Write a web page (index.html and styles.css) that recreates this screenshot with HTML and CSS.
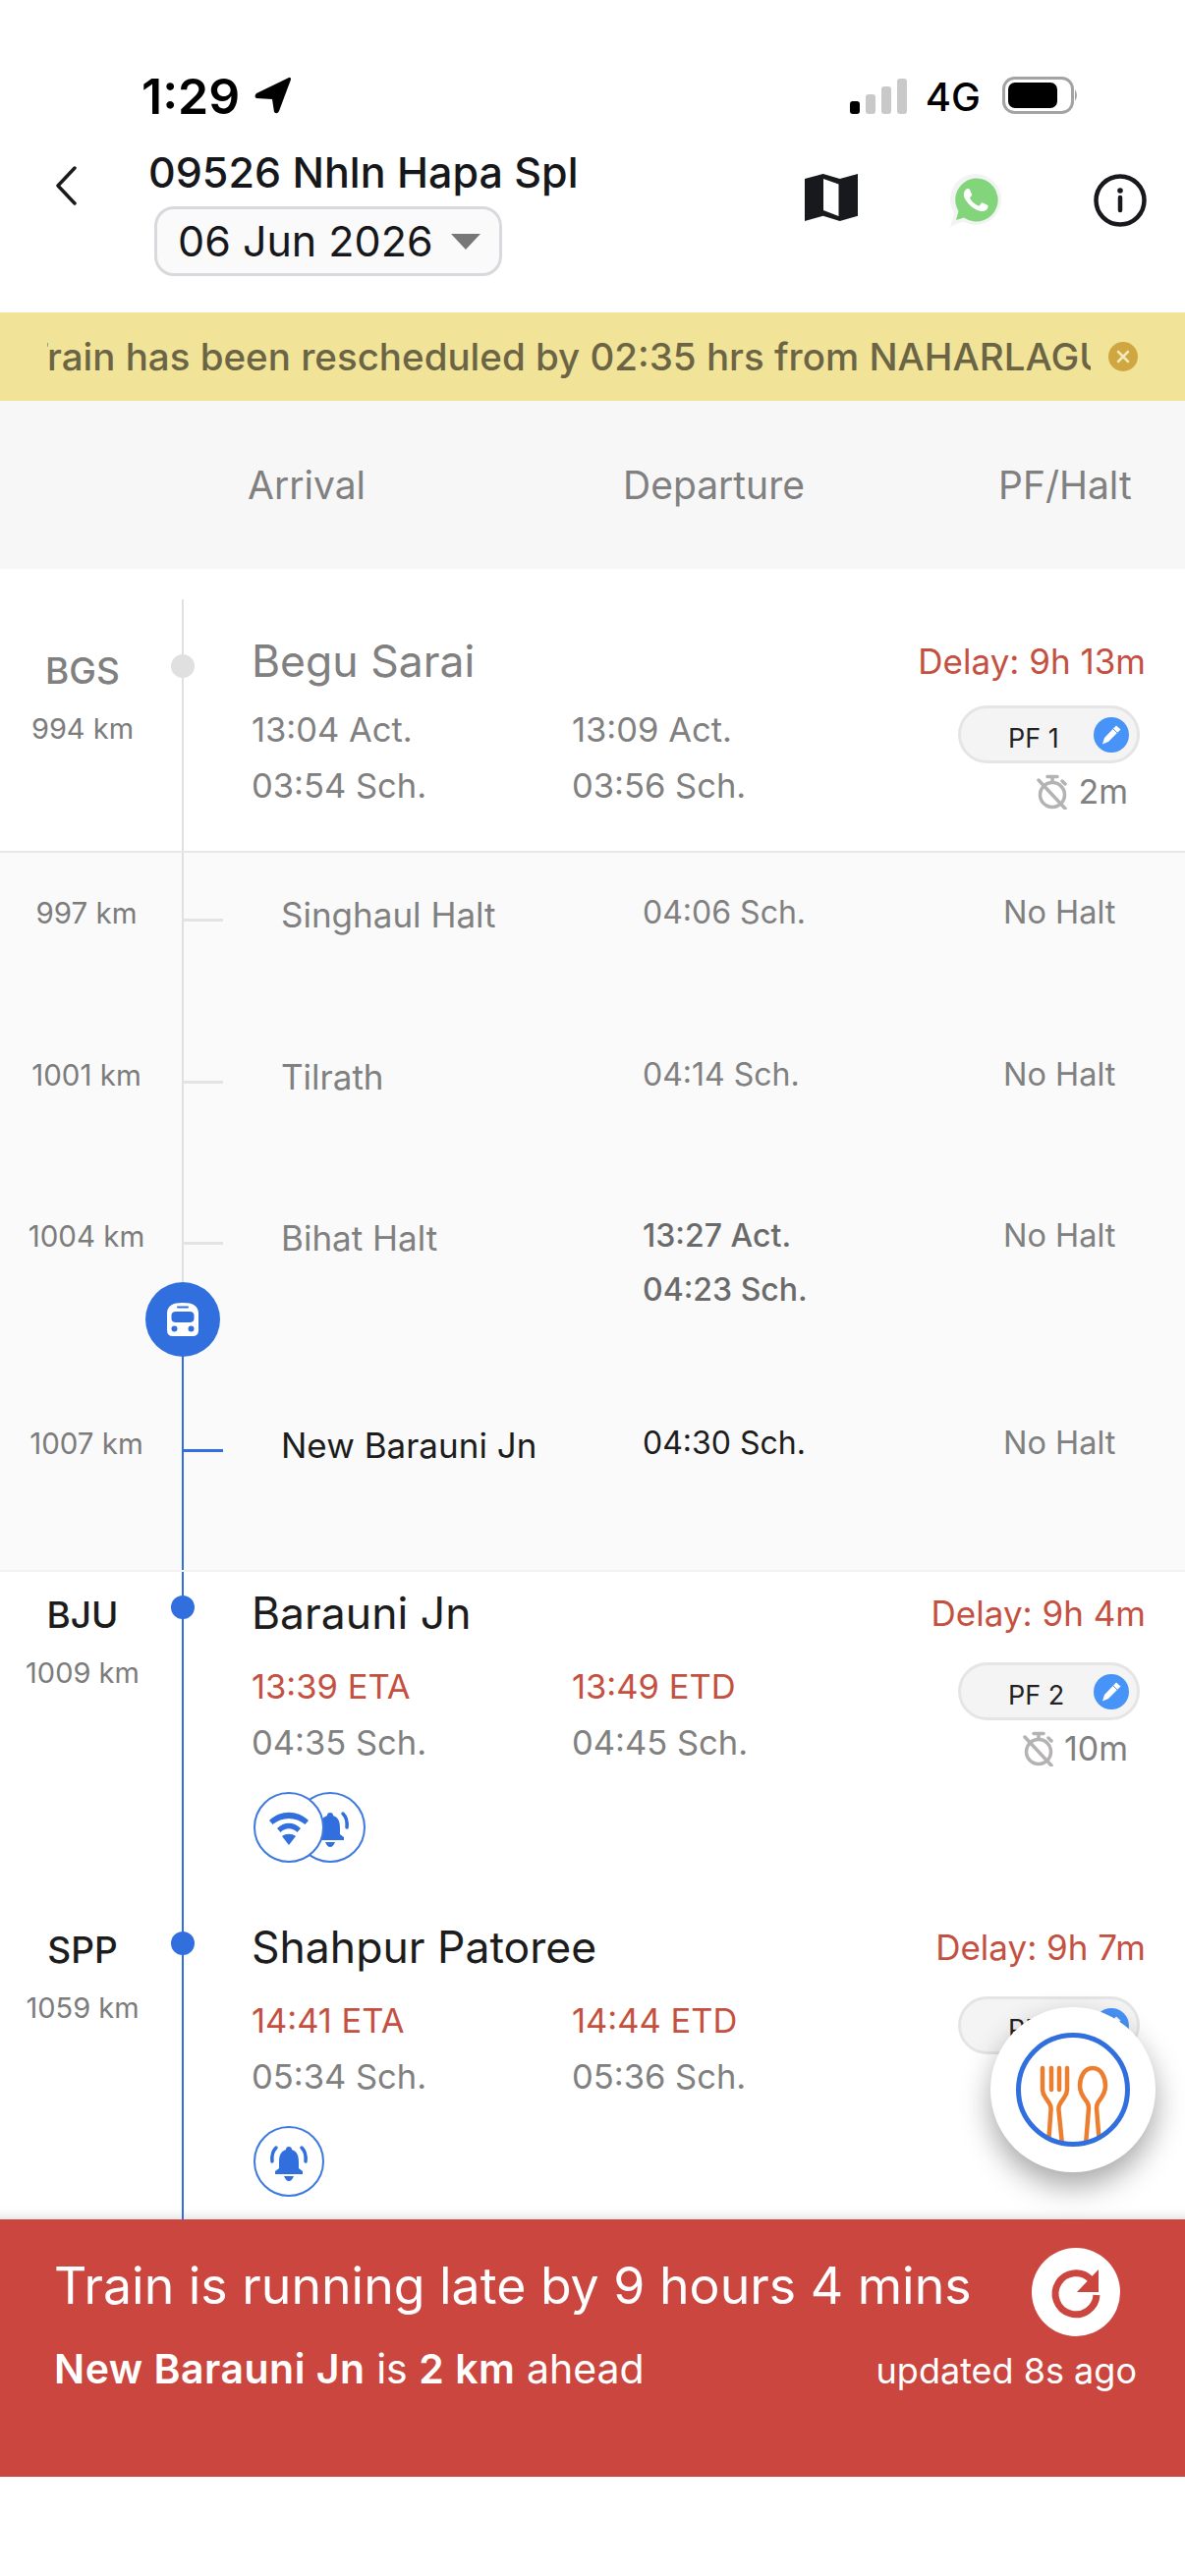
FILE: index.html
```html
<!DOCTYPE html>
<html lang="en">
<head>
  <meta charset="UTF-8" />
  <meta name="viewport" content="width=device-width, initial-scale=1.0"/>
  <title>09526 Nhln Hapa Spl</title>
  <link rel="stylesheet" href="styles.css">
</head>
<body>
  <div class="screen">
    <div class="status">
      <span class="clock">1:29</span>
      <svg class="loc" width="40" height="40" viewBox="0 0 40 40"><path d="M36 2 L3 18 Q0 21 3 23 L19 24 L21 37 Q24 40 26 36 L38 4 Q38 1 36 2 Z" fill="#000"/></svg>
      <svg class="signal" width="58" height="38" viewBox="0 0 58 38"><rect x="0" y="24" width="10" height="13" rx="3" fill="#000"/><rect x="16" y="17" width="10" height="20" rx="3" fill="#c9c9c9"/><rect x="32" y="9" width="10" height="28" rx="3" fill="#c9c9c9"/><rect x="48" y="1" width="10" height="36" rx="3" fill="#c9c9c9"/></svg>
      <span class="net">4G</span>
      <svg class="batt" width="78" height="38" viewBox="0 0 78 38"><rect x="1.500" y="1.500" width="70" height="35" rx="11" fill="none" stroke="#a3a3a3" stroke-width="3"/><rect x="6" y="6" width="50" height="26" rx="7" fill="#000"/><path d="M74 13 Q78 19 74 25 Z" fill="#a3a3a3"/></svg>
    </div>

    <div class="topbar">
      <svg class="back" width="24" height="40" viewBox="0 0 24 40"><path d="M21 2 L4 20 L21 38" fill="none" stroke="#1a1a1a" stroke-width="3.500" stroke-linecap="round" stroke-linejoin="round"/></svg>
      <div class="train">
        <div class="train-name">09526 Nhln Hapa Spl</div>
        <div class="date-pill">06 Jun 2026<span class="caret"></span></div>
      </div>
      <div class="top-icons">
        <svg width="54" height="48" viewBox="0 0 54 48"><path fill-rule="evenodd" d="M0 5 L18.700 0 L35.700 5 L54 0 V42.700 L35.700 48 L18.700 42.700 L0 48 Z M19 5 V37 L34.500 43 V10.500 Z" fill="#18191d"/></svg>
        <svg width="52" height="54" viewBox="0 0 52 54"><path d="M26 0 A26 26 0 1 1 13 48.500 L0 54 L4 40 A26 26 0 0 1 26 0 Z" fill="#f2f4f3"/><path d="M26 4.500 A22 22 0 1 1 14 44.500 L6 47 L8.500 38 A22 22 0 0 1 26 4.500 Z" fill="#82d57a"/><path transform="translate(1.500,2) scale(2.050)" fill="#fff" d="M17.472 14.382c-.297-.149-1.758-.867-2.03-.967-.273-.099-.471-.148-.67.15-.197.297-.767.966-.94 1.164-.173.199-.347.223-.644.075-.297-.15-1.255-.463-2.39-1.475-.883-.788-1.48-1.761-1.653-2.059-.173-.297-.018-.458.13-.606.134-.133.298-.347.446-.52.149-.174.198-.298.298-.497.099-.198.05-.371-.025-.52-.075-.149-.669-1.612-.916-2.207-.242-.579-.487-.5-.669-.51-.173-.008-.371-.01-.57-.01-.198 0-.52.074-.792.372-.272.297-1.04 1.016-1.04 2.479 0 1.462 1.065 2.875 1.213 3.074.149.198 2.096 3.2 5.077 4.487.709.306 1.262.489 1.694.625.712.227 1.36.195 1.871.118.571-.085 1.758-.719 2.006-1.413.248-.694.248-1.289.173-1.413-.074-.124-.272-.198-.57-.347z"/></svg>
        <svg width="54" height="54" viewBox="0 0 54 54"><circle cx="27" cy="27" r="24.500" fill="none" stroke="#18191d" stroke-width="4.500"/><circle cx="27" cy="17" r="2.800" fill="#18191d"/><path d="M27 24 V37" stroke="#18191d" stroke-width="4.500" stroke-linecap="round"/></svg>
      </div>
    </div>

    <div class="notice">
      <div class="notice-clip"><span class="notice-text">Train has been rescheduled by 02:35 hrs from NAHARLAGUN</span></div>
      <svg width="30" height="30" viewBox="0 0 30 30"><circle cx="15" cy="15" r="15" fill="#cfa640"/><path d="M10 10 L20 20 M20 10 L10 20" stroke="#f3e9b8" stroke-width="2.500" stroke-linecap="round"/></svg>
    </div>

    <div class="table-head">
      <span class="th-arr">Arrival</span>
      <span class="th-dep">Departure</span>
      <span class="th-pf">PF/Halt</span>
    </div>

    <div class="list">
      <div class="stop stop-past">
        <div class="side">
          <div class="code">BGS</div>
          <div class="km">994 km</div>
        </div>
        <div class="rail rail-first"><i class="dot"></i></div>
        <div class="body">
          <div class="head">
            <span class="name">Begu Sarai</span>
            <span class="delay">Delay: 9h 13m</span>
          </div>
          <div class="main">
            <div class="times">
              <div><div>13:04 Act.</div><div>03:54 Sch.</div></div>
              <div><div>13:09 Act.</div><div>03:56 Sch.</div></div>
            </div>
            <div class="pf">
              <div class="pf-pill"><span>PF 1</span><svg width="36" height="36" viewBox="0 0 36 36"><use href="#pen"/></svg></div>
              <div class="halt-time"><svg width="32" height="36" viewBox="0 0 32 36"><use href="#timer-off"/></svg>2m</div>
            </div>
          </div>
        </div>
      </div>

      <div class="halts">
        <div class="halt">
          <span class="km">997 km</span>
          <div class="rail"><i class="tick"></i></div>
          <span class="halt-name">Singhaul Halt</span>
          <div class="halt-time-col">04:06 Sch.</div>
          <span class="no-halt">No Halt</span>
        </div>
        <div class="halt halt-b">
          <span class="km">1001 km</span>
          <div class="rail"><i class="tick"></i></div>
          <span class="halt-name">Tilrath</span>
          <div class="halt-time-col">04:14 Sch.</div>
          <span class="no-halt">No Halt</span>
        </div>
        <div class="halt halt-c">
          <span class="km">1004 km</span>
          <div class="rail">
            <i class="tick"></i>
            <i class="rail-blue"></i>
            <span class="marker"><svg width="32" height="34" viewBox="0 0 32 34"><path fill-rule="evenodd" d="M16 0 C26 0 32 3 32 11 V28 Q32 34 26 34 H6 Q0 34 0 28 V11 C0 3 6 0 16 0 Z M11 3.500 A1 1 0 0 0 11 5.500 H21 A1 1 0 0 0 21 3.500 Z M9 9 Q4.500 9 4.500 13 V16 Q4.500 20 9 20 H23 Q27.500 20 27.500 16 V13 Q27.500 9 23 9 Z" fill="#fff"/><circle cx="7.500" cy="26.500" r="3" fill="#316fde"/><circle cx="24.500" cy="26.500" r="3" fill="#316fde"/></svg></span>
          </div>
          <span class="halt-name">Bihat Halt</span>
          <div class="halt-time-col strong"><div>13:27 Act.</div><div class="second">04:23 Sch.</div></div>
          <span class="no-halt">No Halt</span>
        </div>
        <div class="halt halt-d">
          <span class="km">1007 km</span>
          <div class="rail rail-on"><i class="tick"></i></div>
          <span class="halt-name">New Barauni Jn</span>
          <div class="halt-time-col">04:30 Sch.</div>
          <span class="no-halt">No Halt</span>
        </div>
      </div>

      <div class="stop stop-next">
        <div class="side">
          <div class="code">BJU</div>
          <div class="km">1009 km</div>
        </div>
        <div class="rail rail-on"><i class="dot"></i></div>
        <div class="body">
          <div class="head">
            <span class="name">Barauni Jn</span>
            <span class="delay">Delay: 9h 4m</span>
          </div>
          <div class="main">
            <div class="times">
              <div><div class="late">13:39 ETA</div><div>04:35 Sch.</div></div>
              <div><div class="late">13:49 ETD</div><div>04:45 Sch.</div></div>
            </div>
            <div class="pf">
              <div class="pf-pill"><span>PF 2</span><svg width="36" height="36" viewBox="0 0 36 36"><use href="#pen"/></svg></div>
              <div class="halt-time"><svg width="32" height="36" viewBox="0 0 32 36"><use href="#timer-off"/></svg>10m</div>
            </div>
          </div>
          <div class="badges">
            <span class="badge"><svg width="42" height="42" viewBox="0 0 42 42"><use href="#wifi"/></svg></span>
            <span class="badge"><svg width="42" height="42" viewBox="0 0 42 42"><use href="#bell"/></svg></span>
          </div>
        </div>
      </div>

      <div class="stop stop-next">
        <div class="side">
          <div class="code">SPP</div>
          <div class="km">1059 km</div>
        </div>
        <div class="rail rail-on"><i class="dot"></i></div>
        <div class="body">
          <div class="head">
            <span class="name">Shahpur Patoree</span>
            <span class="delay">Delay: 9h 7m</span>
          </div>
          <div class="main">
            <div class="times">
              <div><div class="late">14:41 ETA</div><div>05:34 Sch.</div></div>
              <div><div class="late">14:44 ETD</div><div>05:36 Sch.</div></div>
            </div>
            <div class="pf">
              <div class="pf-pill"><span>PF 1</span><svg width="36" height="36" viewBox="0 0 36 36"><use href="#pen"/></svg></div>
            </div>
          </div>
          <div class="badges">
            <span class="badge"><svg width="42" height="42" viewBox="0 0 42 42"><use href="#bell"/></svg></span>
          </div>
        </div>
      </div>

      <div class="food">
        <svg width="116" height="116" viewBox="0 0 116 116">
          <defs><clipPath id="ring"><circle cx="58" cy="58" r="55"/></clipPath></defs>
          <g clip-path="url(#ring)" fill="none" stroke="#ec7e30" stroke-width="4.500" stroke-linecap="round" stroke-linejoin="round">
            <path d="M27 36 V58 Q27 62 30 66 L34 72 Q36 75 35.500 79 L33 114 M52 36 V58 Q52 62 49 66 L45 72 Q43 75 43.500 79 L47 114 M36 36 V58 M44 36 V58"/>
            <path d="M78 36 C87 36 91 46 91 54 C91 62 87 66 84 70 Q82 73 82 77 L85 114 M78 36 C69 36 65 46 65 54 C65 62 69 66 72 70 Q74 73 74 77 L71 114"/>
          </g>
          <circle cx="58" cy="58" r="55.500" fill="none" stroke="#316fde" stroke-width="5"/>
        </svg>
      </div>
    </div>

    <div class="status-bar">
      <div class="sb-row">
        <div class="sb-title">Train is running late by 9 hours 4 mins</div>
        <svg width="90" height="90" viewBox="0 0 90 90"><circle cx="45" cy="45" r="45" fill="#fff"/><path d="M60 32 A21 21 0 1 0 66 48" fill="none" stroke="#cb463e" stroke-width="7"/><path d="M68 22 V45 H46 Z" fill="#cb463e"/></svg>
      </div>
      <div class="sb-row sb-row-low">
        <div class="sb-sub"><b>New Barauni Jn</b> is <b>2 km</b> ahead</div>
        <div class="sb-updated">updated 8s ago</div>
      </div>
    </div>
    <div class="bottom-gap"></div>
  </div>

  <svg class="sprites" width="0" height="0">
    <defs>
      <g id="pen"><circle cx="18" cy="18" r="18" fill="#4893f8"/><path d="M23 8.500 L27.500 12.500 L15 25 L9 27.500 L11 21 Z" fill="#fff"/><path d="M20 12 L24 16" stroke="#4893f8" stroke-width="1"/></g>
      <g id="timer-off" fill="none" stroke="#b4b2b2" stroke-width="3.500"><circle cx="16" cy="21" r="12.500"/><path d="M11 2.500 H21 M16 3 V8 M26 7 L29 10 M2 6 L29 35" stroke-linecap="round"/></g>
      <g id="wifi" fill="#316fde"><path d="M1 14 C12 3 30 3 41 14 L37.500 18 C28 10 14 10 4.500 18 Z"/><path d="M9 22 C16 15 26 15 33 22 L29.500 26 C24.500 21 17.500 21 12.500 26 Z"/><path d="M21 39 L14 30 C18 27 24 27 28 30 Z"/></g>
      <g id="bell" fill="#316fde"><path d="M21 6 Q24 6 24 9 C30 11 31 16 31 22 V28 L35 31 V34 H7 V31 L11 28 V22 C11 16 12 11 18 9 Q18 6 21 6 Z"/><path d="M16 36 H26 Q24 41 21 41 Q18 41 16 36 Z"/><path d="M8 7 Q3 12 4 21 M34 7 Q39 12 38 21" fill="none" stroke="#316fde" stroke-width="3.500" stroke-linecap="round"/></g>
    </defs>
  </svg>
</body>
</html>
```

FILE: styles.css
```css
* {
  box-sizing: border-box;
}
body {
  margin: 0;
  background: #fff;
  font-family: "Inter", "Roboto", sans-serif;
  color: #808080;
}
.sprites {
  position: absolute;
}
.screen {
  width: 1206px;
  height: 2622px;
  display: flex;
  flex-direction: column;
  overflow: hidden;
}

/* status bar */
.status {
  height: 140px;
  padding: 77px 108px 0 144px;
  display: flex;
  align-items: flex-start;
  flex: none;
}
.clock {
  font-size: 50px;
  line-height: 42px;
  font-weight: 600;
  color: #000;
}
.loc {
  margin: 0 0 0 14px;
}
.signal {
  margin-left: auto;
  margin-top: 2px;
}
.net {
  font-size: 40px;
  line-height: 38px;
  font-weight: 500;
  color: #000;
  margin: 3px 22px 0 19px;
}
.batt {
  margin-top: 1px;
}

/* train header */
.topbar {
  height: 178px;
  flex: none;
  display: flex;
  align-items: flex-start;
  padding: 0 39px 0 55px;
}
.back {
  margin-top: 29px;
  margin-right: 72px;
}
.train-name {
  font-size: 43px;
  line-height: 44px;
  font-weight: 500;
  color: #16171a;
  margin-top: 13px;
  white-space: nowrap;
}
.date-pill {
  margin: 13px 0 0 6px;
  width: 354px;
  height: 71px;
  border: 3px solid #d9d9dd;
  border-radius: 20px;
  background: #fafafa;
  color: #16171a;
  font-size: 43px;
  line-height: 65px;
  padding-left: 21px;
  display: flex;
  white-space: nowrap;
}
.caret {
  width: 0;
  height: 0;
  margin: 25px 0 0 18px;
  border-left: 15px solid transparent;
  border-right: 15px solid transparent;
  border-top: 16px solid #777;
}
.top-icons {
  margin-left: auto;
  margin-top: 37px;
  display: flex;
  align-items: flex-start;
  gap: 94px;
}

/* reschedule notice */
.notice {
  flex: none;
  height: 90px;
  background: #f1e397;
  padding: 0 48px;
  display: flex;
  align-items: center;
  gap: 18px;
}
.notice-clip {
  width: 1062px;
  overflow: hidden;
  white-space: nowrap;
}
.notice-text {
  display: inline-block;
  margin-left: -23px;
  font-size: 38.500px;
  font-weight: 500;
  color: #6b6545;
}

.table-head {
  flex: none;
  height: 171px;
  background: #f7f7f7;
  font-size: 39px;
  line-height: 171px;
  position: relative;
  display: flex;
}
.th-arr {
  margin-left: 252px;
  width: 382px;
}
.th-dep {
  width: 382px;
}

/* stops */
.list {
  flex: 1;
  min-height: 0;
  overflow: hidden;
  position: relative;
  box-shadow: inset 0 -14px 12px -12px rgba(0, 0, 0, 0.14);
}
.stop {
  display: flex;
  align-items: stretch;
}
.stop-past {
  height: 289px;
  padding-top: 70px;
  border-bottom: 2px solid #e8e8e8;
}
.stop-next {
  height: 340px;
  padding-top: 16px;
}
.stop-next + .stop-next {
  height: 320px;
}
.side {
  width: 168px;
  flex: none;
  text-align: center;
}
.stop-past .side {
  padding-top: 8px;
}
.code {
  font-size: 37px;
  line-height: 44px;
  font-weight: 500;
  margin-top: 4px;
}
.stop-next .code {
  color: #1c1c1c;
  margin-top: 6px;
}
.stop-next + .stop-next .code {
  margin-top: 7px;
}
.km {
  font-size: 29px;
  line-height: 40px;
  color: #7c7c7c;
  white-space: nowrap;
}
.side .km {
  margin-top: 17px;
}
.rail {
  width: 88px;
  flex: none;
  position: relative;
  align-self: stretch;
}
.rail::before {
  content: "";
  position: absolute;
  left: 17px;
  width: 2px;
  top: 0;
  bottom: 0;
  background: #e0e0e0;
}
.stop .rail {
  margin-top: -70px;
}
.stop-next .rail {
  margin-top: -16px;
}
.rail-first::before {
  top: 31px;
}
.rail-on::before {
  background: #316fde;
}
.dot {
  position: absolute;
  left: 6px;
  top: 87px;
  width: 24px;
  height: 24px;
  border-radius: 50%;
  background: #e0e0e0;
}
.stop-next .dot {
  background: #316fde;
  top: 24px;
}
.stop-next + .stop-next .dot {
  top: 26px;
}
.tick {
  position: absolute;
  left: 18px;
  top: 67px;
  width: 41px;
  height: 3px;
  background: #e3e3e3;
}
.rail-on .tick {
  background: #316fde;
}
.marker {
  position: absolute;
  left: -20px;
  top: 108px;
  width: 76px;
  height: 76px;
  border-radius: 50%;
  background: #316fde;
  display: flex;
  align-items: center;
  justify-content: center;
}
.rail-blue {
  position: absolute;
  left: 17px;
  width: 2px;
  top: 146px;
  bottom: 0;
  background: #316fde;
}
.body {
  flex: 1;
  min-width: 0;
  padding-right: 40px;
}
.head {
  display: flex;
  justify-content: space-between;
  align-items: center;
  height: 52px;
}
.stop-past .head {
  margin-top: -2px;
}
.name {
  font-size: 44.500px;
  color: #1c1c1c;
}
.stop-past .name {
  color: #808080;
}
.delay {
  font-size: 35px;
  color: #c4503f;
}
.main {
  display: flex;
  justify-content: space-between;
  margin-top: 20px;
}
.stop-past .main {
  margin-top: 15px;
}
.times {
  display: grid;
  grid-template-columns: 326px 300px;
  font-size: 34.500px;
  line-height: 57px;
  white-space: nowrap;
}
.late {
  color: #c4503f;
}
.pf {
  width: 185px;
  margin: 4px 6px 0 0;
  flex: none;
}
.pf-pill {
  height: 59px;
  border: 3px solid #e5e5e5;
  border-radius: 30px;
  background: #f4f4f4;
  display: flex;
  align-items: center;
  justify-content: space-between;
  padding: 0 8px 0 48px;
  font-size: 27px;
  color: #222;
}
.pf-pill span {
  padding-top: 7px;
}
.pf-pill svg {
  display: block;
}
.halt-time {
  display: flex;
  justify-content: flex-end;
  align-items: center;
  gap: 10px;
  margin: 9px 12px 0 0;
  font-size: 34px;
  line-height: 40px;
}
.badges {
  display: flex;
  margin-top: 22px;
  padding-left: 2px;
}
.badge {
  width: 72px;
  height: 72px;
  border: 2px solid #3e79e0;
  border-radius: 50%;
  background: #fff;
  display: flex;
  align-items: center;
  justify-content: center;
  position: relative;
  z-index: 1;
}
.badge + .badge {
  margin-left: -30px;
  z-index: 0;
}

/* halts without stop */
.halts {
  background: #fafafa;
  border-bottom: 2px solid #f2f2f2;
}
.halt {
  height: 165px;
  display: flex;
  align-items: flex-start;
  padding-top: 39px;
  line-height: 44px;
  white-space: nowrap;
}
.halt-b {
  height: 164px;
}
.halt-c {
  height: 211px;
}
.halt-d {
  height: 190px;
}
.halt .km {
  width: 168px;
  flex: none;
  text-align: center;
  padding-left: 8px;
  line-height: 44px;
  font-size: 29.500px;
}
.halt .rail {
  align-self: stretch;
  margin-top: -39px;
  margin-bottom: 0;
}
.halt-name {
  width: 398px;
  padding-left: 30px;
  margin-top: 2px;
  font-size: 35px;
  flex: none;
}
.halt-d .halt-name,
.halt-d .halt-time-col {
  color: #1c1c1c;
}
.halt-time-col {
  width: 367px;
  font-size: 32px;
  flex: none;
}
.strong {
  font-weight: 500;
  color: #6a6a6a;
}
.second {
  margin-top: 11px;
}
.no-halt {
  font-size: 32.500px;
}

/* food button */
.food {
  position: absolute;
  left: 1008px;
  top: 1464px;
  width: 168px;
  height: 168px;
  border-radius: 50%;
  background: #fff;
  box-shadow: 0 14px 30px rgba(0, 0, 0, 0.35);
  display: flex;
  align-items: center;
  justify-content: center;
}

/* running status */
.status-bar {
  flex: none;
  height: 262px;
  background: #cb463e;
  color: #fff;
  padding: 29px 49px 0 55px;
}
.sb-row {
  display: flex;
  justify-content: space-between;
  align-items: flex-start;
}
.sb-row svg {
  margin-right: 17px;
  flex: none;
}
.sb-row-low {
  margin-top: 8px;
  align-items: center;
}
.sb-title {
  font-size: 51.800px;
  line-height: 76px;
  white-space: nowrap;
}
.sb-sub {
  font-size: 41px;
  line-height: 50px;
  white-space: nowrap;
}
.sb-sub b {
  font-weight: 600;
  letter-spacing: 0.5px;
}
.sb-updated {
  font-size: 36px;
  line-height: 44px;
  white-space: nowrap;
  padding-top: 4px;
}
.bottom-gap {
  flex: none;
  height: 101px;
}
```
